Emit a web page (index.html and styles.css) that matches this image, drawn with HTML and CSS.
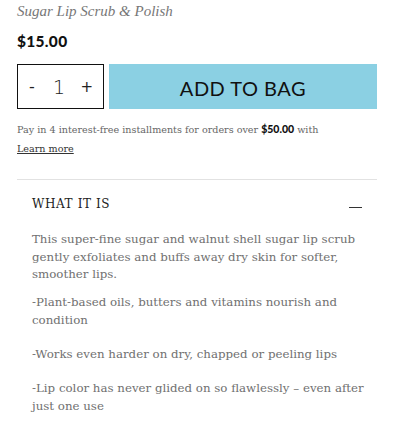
FILE: index.html
```html
<!DOCTYPE html>
<html>
<head>
<meta charset="utf-8">
<link rel="stylesheet" href="styles.css">
</head>
<body>
<div class="page">
  <div class="title">Sugar Lip Scrub &amp; Polish</div>
  <div class="price">$15.00</div>
  <div class="buy">
    <div class="qty"><span class="minus">-</span><span class="num">1</span><span class="plus">+</span></div>
    <button class="add">ADD TO BAG</button>
  </div>
  <div class="pay">Pay in 4 interest-free installments for orders over <b>$50.00</b> with</div>
  <div class="learn">Learn more</div>
  <div class="section">
    <div class="head"><span>WHAT IT IS</span><span class="dash"></span></div>
    <p>This super-fine sugar and walnut shell sugar lip scrub gently exfoliates and buffs away dry skin for softer, smoother lips.</p>
    <p>-Plant-based oils, butters and vitamins nourish and condition</p>
    <p>-Works even harder on dry, chapped or peeling lips</p>
    <p>-Lip color has never glided on so flawlessly – even after just one use</p>
  </div>
</div>
</body>
</html>
```
FILE: styles.css
```css
* { box-sizing: border-box; }
html, body { margin: 0; padding: 0; background: #fff; }
.page {
  padding: 0 30px 0 17px;
  font-family: "DejaVu Serif", serif;
}
.title {
  font-family: "Liberation Serif", serif;
  font-style: italic;
  font-size: 15px;
  color: #777;
  line-height: 20px;
  padding-top: 1px;
}
.price {
  font-family: Lato, sans-serif;
  font-weight: 900;
  font-size: 15.5px;
  letter-spacing: 0.3px;
  color: #111;
  margin-top: 11px;
  line-height: 18px;
}
.buy {
  display: flex;
  gap: 5px;
  margin-top: 14px;
  height: 45px;
}
.qty {
  width: 87px;
  border: 1px solid #111;
  display: flex;
  align-items: center;
  justify-content: space-between;
  padding: 0 10px 0 11px;
  font-family: "DejaVu Sans", sans-serif;
  color: #222;
}
.qty .minus { font-size: 16px; }
.qty .num { font-size: 19px; font-weight: 300; margin-left: 3px; }
.qty .plus { font-size: 15px; }
.add {
  flex: 1;
  border: 0;
  background: #8bd0e3;
  color: #111;
  font-family: Lato, sans-serif;
  font-size: 20px;
  letter-spacing: 0.5px;
  padding: 3px 0 0;
}
.pay {
  margin-top: 13px;
  font-size: 9.6px;
  color: #666;
  line-height: 14px;
}
.pay b { font-family: Lato, sans-serif; font-weight: 900; color: #111; font-size: 10.5px; }
.learn {
  margin-top: 5px;
  font-size: 9.6px;
  color: #333;
  text-decoration: underline;
  line-height: 14px;
}
.section {
  margin-top: 23px;
  border-top: 1px solid #e2e2e2;
  padding: 0 10px 0 15px;
}
.head {
  display: flex;
  justify-content: space-between;
  align-items: center;
  margin-top: 16px;
  padding-right: 5px;
  font-size: 12px;
  letter-spacing: 0.6px;
  color: #222;
  line-height: 16px;
}
.dash {
  width: 13px;
  height: 1px;
  background: #333;
  margin-top: 7px;
}
.section p {
  margin: 16.5px 0 0;
  font-size: 11.8px;
  line-height: 17.7px;
  color: #707070;
}
.section p:nth-of-type(1) { margin-top: 19px; }
.section p:nth-of-type(2) { margin-top: 10px; }
```
